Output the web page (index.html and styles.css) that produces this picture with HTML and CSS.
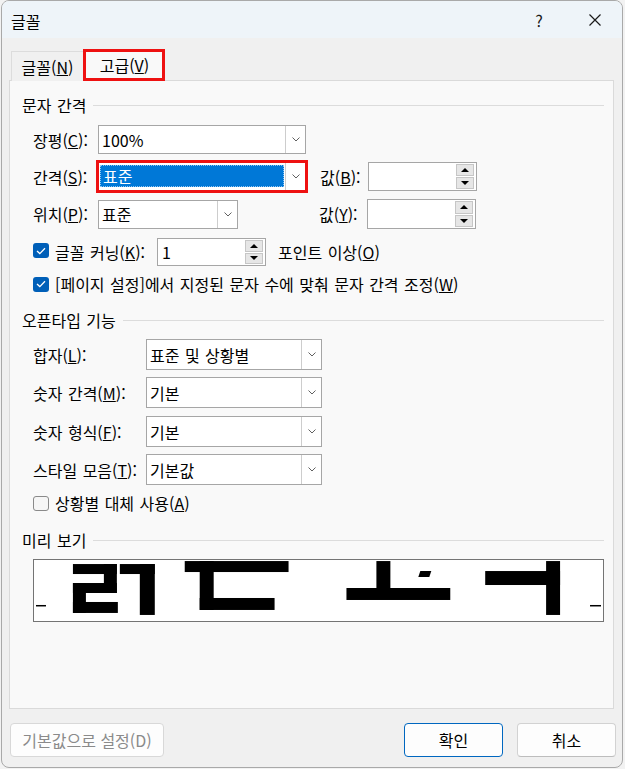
FILE: index.html
```html
<!DOCTYPE html>
<html lang="ko">
<head>
<meta charset="utf-8">
<title>글꼴</title>
<link rel="stylesheet" href="styles.css">
</head>
<body>
<div class="window">
  <div class="titlebar">
    <span class="title">글꼴</span>
    <span class="help">?</span>
    <span class="close"><svg width="12" height="12" viewBox="0 0 12 12"><path d="M0.5 0.5 L11.5 11.5 M11.5 0.5 L0.5 11.5" stroke="#1a1a1a" stroke-width="1.2" fill="none"/></svg></span>
  </div>

  <div class="tabs">
    <div class="tab">글꼴(<u>N</u>)</div>
    <div class="tab active">고급(<u>V</u>)</div>
  </div>

  <div class="panel">
    <div class="group-title gt1"><span>문자 간격</span></div>

    <div class="row r1">
      <span class="lbl w65">장평(<u>C</u>):</span>
      <div class="combo cw208"><span class="val">100%</span><span class="arrow"><svg width="8" height="5" viewBox="0 0 8 5"><polyline points="0.5,0.5 4,4 7.5,0.5" fill="none" stroke="#606060" stroke-width="1"/></svg></span></div>
    </div>

    <div class="row r2">
      <span class="lbl w65">간격(<u>S</u>):</span>
      <div class="cell222">
        <div class="combo cw208 marked"><span class="val"><span class="sel">표준</span></span><span class="arrow"><svg width="8" height="5" viewBox="0 0 8 5"><polyline points="0.5,0.5 4,4 7.5,0.5" fill="none" stroke="#606060" stroke-width="1"/></svg></span></div>
      </div>
      <span class="lbl w48">값(<u>B</u>):</span>
      <div class="spin sw109 sh29"><span class="spin-text"></span><span class="spin-btns"><span class="sb up"></span><span class="sb down"></span></span></div>
    </div>

    <div class="row r3">
      <span class="lbl w65">위치(<u>P</u>):</span>
      <div class="cell221">
        <div class="combo cw140"><span class="val">표준</span><span class="arrow"><svg width="8" height="5" viewBox="0 0 8 5"><polyline points="0.5,0.5 4,4 7.5,0.5" fill="none" stroke="#606060" stroke-width="1"/></svg></span></div>
      </div>
      <span class="lbl w48">값(<u>Y</u>):</span>
      <div class="spin sw109 sh30"><span class="spin-text"></span><span class="spin-btns"><span class="sb up"></span><span class="sb down"></span></span></div>
    </div>

    <div class="row r4">
      <span class="check on"><svg width="10" height="8" viewBox="0 0 10 8"><polyline points="1,4 3.8,6.6 9,1.2" fill="none" stroke="#fff" stroke-width="1.3"/></svg></span>
      <span class="lbl w102">글꼴 커닝(<u>K</u>):</span>
      <div class="spin sw109 sh28"><span class="spin-text">1</span><span class="spin-btns"><span class="sb up"></span><span class="sb down"></span></span></div>
      <span class="lbl after">포인트 이상(<u>O</u>)</span>
    </div>

    <div class="row r5">
      <span class="check on"><svg width="10" height="8" viewBox="0 0 10 8"><polyline points="1,4 3.8,6.6 9,1.2" fill="none" stroke="#fff" stroke-width="1.3"/></svg></span>
      <span class="lbl">[페이지 설정]에서 지정된 문자 수에 맞춰 문자 간격 조정(<u>W</u>)</span>
    </div>

    <div class="group-title gt2"><span>오픈타입 기능</span></div>

    <div class="row ot o1">
      <span class="lbl w113">합자(<u>L</u>):</span>
      <div class="combo cw176 tall"><span class="val">표준 및 상황별</span><span class="arrow"><svg width="8" height="5" viewBox="0 0 8 5"><polyline points="0.5,0.5 4,4 7.5,0.5" fill="none" stroke="#606060" stroke-width="1"/></svg></span></div>
    </div>
    <div class="row ot o2">
      <span class="lbl w113">숫자 간격(<u>M</u>):</span>
      <div class="combo cw176 tall"><span class="val">기본</span><span class="arrow"><svg width="8" height="5" viewBox="0 0 8 5"><polyline points="0.5,0.5 4,4 7.5,0.5" fill="none" stroke="#606060" stroke-width="1"/></svg></span></div>
    </div>
    <div class="row ot o3">
      <span class="lbl w113">숫자 형식(<u>F</u>):</span>
      <div class="combo cw176 tall"><span class="val">기본</span><span class="arrow"><svg width="8" height="5" viewBox="0 0 8 5"><polyline points="0.5,0.5 4,4 7.5,0.5" fill="none" stroke="#606060" stroke-width="1"/></svg></span></div>
    </div>
    <div class="row ot o4">
      <span class="lbl w113">스타일 모음(<u>T</u>):</span>
      <div class="combo cw176 tall"><span class="val">기본값</span><span class="arrow"><svg width="8" height="5" viewBox="0 0 8 5"><polyline points="0.5,0.5 4,4 7.5,0.5" fill="none" stroke="#606060" stroke-width="1"/></svg></span></div>
    </div>

    <div class="row r6">
      <span class="check off"></span>
      <span class="lbl">상황별 대체 사용(<u>A</u>)</span>
    </div>

    <div class="group-title gt3"><span>미리 보기</span></div>

    <div class="preview">
      <svg width="570" height="62" viewBox="0 0 570 62">
        <rect x="2" y="45" width="10" height="1.5" fill="#000"/>
        <rect x="557" y="45" width="11" height="1.5" fill="#000"/>
        <g fill="#000">
          <rect x="39" y="4" width="44" height="10"/>
          <rect x="70" y="4" width="13" height="29"/>
          <rect x="39" y="23" width="44" height="10"/>
          <rect x="39" y="23" width="13" height="30"/>
          <rect x="39" y="42" width="45" height="11"/>
          <rect x="86" y="4" width="35" height="10"/>
          <rect x="106" y="4" width="15" height="51"/>
          <rect x="151" y="1" width="104" height="11"/>
          <rect x="166" y="1" width="14" height="49"/>
          <rect x="166" y="38" width="75" height="12"/>
          <rect x="343" y="1" width="14" height="28"/>
          <rect x="313" y="28" width="104" height="12"/>
          <polygon points="387,11 398,11 396,17 385,17"/>
          <rect x="452" y="11" width="75" height="14"/>
          <rect x="513" y="1" width="14" height="54"/>
        </g>
      </svg>
    </div>
  </div>

  <div class="footer">
    <button class="btn disabled">기본값으로 설정(D)</button>
    <div class="btn-group">
      <button class="btn primary">확인</button>
      <button class="btn">취소</button>
    </div>
  </div>
</div>
</body>
</html>
```

FILE: styles.css
```css
* { box-sizing: border-box; }

html, body {
  margin: 0;
  padding: 0;
}

body {
  background: #f2f2f2;
  width: 625px;
  height: 769px;
  overflow: hidden;
  font-family: "Noto Sans CJK KR", "Malgun Gothic", "Noto Sans", sans-serif;
  font-size: 16px;
  word-spacing: 1px;
  color: #000;
}

.window {
  margin-left: 1px;
  width: 622px;
  height: 768px;
  border: 1px solid #a9a9a9;
  border-radius: 8px;
  background: #f0f0f0;
  overflow: hidden;
  display: flex;
  flex-direction: column;
}

.titlebar {
  height: 37px;
  flex: none;
  background: #eef4f9;
  display: flex;
  align-items: center;
  padding-left: 9px;
}

.title {
  flex: 1;
  line-height: 20px;
  padding-top: 2px;
}

.help {
  width: 14px;
  text-align: center;
  margin-right: 43px;
  line-height: 20px;
  color: #1a1a1a;
}

.close {
  width: 12px;
  height: 12px;
  margin-right: 21px;
  display: flex;
}

.tabs {
  display: flex;
  align-items: flex-end;
  height: 32px;
  margin: 11px 0 0 8px;
  position: relative;
  z-index: 1;
}

.tab {
  height: 30px;
  width: 72px;
  margin-left: 1px;
  display: flex;
  align-items: center;
  justify-content: center;
  background: #f0f0f0;
  border-top: 1px solid #dcdcdc;
  border-left: 1px solid #dcdcdc;
  line-height: 20px;
  padding-top: 1px;
}

.tab.active {
  height: 32px;
  width: 82px;
  margin-left: 0;
  border: none;
  background: #f9f9f9;
  box-shadow: inset 0 0 0 3px #ee1111;
  padding-top: 0;
  padding-left: 1px;
}

.panel {
  margin: -1px 0 0 7px;
  width: 605px;
  height: 629px;
  flex: none;
  background: #f9f9f9;
  border: 1px solid #dadada;
  padding: 0 9px 0 12px;
  display: flex;
  flex-direction: column;
}

.group-title {
  display: flex;
  align-items: center;
  gap: 7px;
  height: 20px;
  line-height: 20px;
}

.group-title::after {
  content: "";
  flex: 1;
  height: 1px;
  background: #dcdcdc;
}

.gt1 { margin-top: 14px; }
.gt2 { margin-top: 16px; }
.gt3 { margin-top: 17px; }

.row {
  display: flex;
  align-items: center;
  margin-left: 11px;
}

.r1 { margin-top: 10px; height: 29px; }
.r2 { margin-top: 8px; height: 29px; }
.r3 { margin-top: 8px; height: 30px; }
.r4 { margin-top: 9px; height: 28px; }
.r5 { margin-top: 8px; height: 20px; }
.o1 { margin-top: 9px; }
.o2 { margin-top: 7px; }
.o3 { margin-top: 8px; }
.o4 { margin-top: 7px; }
.r6 { margin-top: 8px; height: 20px; }

.lbl {
  line-height: 20px;
  white-space: nowrap;
  flex: none;
}

.w65 { width: 65px; }
.w48 { width: 48px; }
.w102 { width: 102px; }
.w113 { width: 113px; }

.lbl.after { margin-left: 12px; }

.cell222 { width: 222px; flex: none; }
.cell221 { width: 221px; flex: none; }

.combo {
  display: flex;
  height: 29px;
  border: 1px solid #a6a6a6;
  background: #fff;
}

.combo.tall { height: 31px; }

.cw208 { width: 208px; }
.cw140 { width: 140px; }
.cw176 { width: 176px; }

.combo .val {
  flex: 1;
  display: flex;
  align-items: center;
  padding-left: 3px;
  line-height: 20px;
  white-space: nowrap;
}

.combo .arrow {
  width: 20px;
  flex: none;
  border-left: 1px solid #cdcdcd;
  display: flex;
  align-items: center;
  justify-content: center;
}

.combo.marked {
  outline: 3px solid #ee1111;
  outline-offset: -1px;
}

.combo.marked .val {
  padding: 2px 1px 3px 1px;
}

.sel {
  flex: 1;
  height: 100%;
  background: #0078d7;
  color: #fff;
  display: flex;
  align-items: center;
  padding-left: 3px;
  outline: 1px dotted #8fc6f2;
  outline-offset: -1px;
}

.spin {
  display: flex;
  border: 1px solid #a6a6a6;
  background: #fff;
  flex: none;
  padding: 1px 2px 1px 0;
}

.sw109 { width: 109px; }
.sh29 { height: 29px; }
.sh30 { height: 30px; }
.sh28 { height: 28px; }

.spin-text {
  flex: 1;
  display: flex;
  align-items: center;
  padding-left: 4px;
  line-height: 20px;
}

.spin-btns {
  width: 18px;
  display: flex;
  flex-direction: column;
  gap: 1px;
}

.sb {
  flex: 1;
  background: #e6e6e6;
  border: 1px solid #c6c6c6;
  display: flex;
  align-items: center;
  justify-content: center;
}

.sb.up::before {
  content: "";
  border-left: 4px solid transparent;
  border-right: 4px solid transparent;
  border-bottom: 4px solid #000;
}

.sb.down::before {
  content: "";
  border-left: 4px solid transparent;
  border-right: 4px solid transparent;
  border-top: 4px solid #000;
}

.check {
  width: 16px;
  height: 15px;
  border-radius: 3px;
  flex: none;
  margin-right: 6px;
  display: flex;
  align-items: center;
  justify-content: center;
}

.check.on {
  background: #005fb8;
}

.r4 .check { margin-top: -3px; }

.check.off {
  border: 1px solid #8a8a8a;
  background: #f6f6f6;
}

.preview {
  margin: 9px 0 0 11px;
  width: 571px;
  height: 63px;
  border: 1px solid #747474;
  background: #fff;
  display: flex;
}

.preview svg { display: block; }

.footer {
  display: flex;
  justify-content: space-between;
  margin: 14px 0 0 8px;
  width: 606px;
}

.btn-group {
  display: flex;
  gap: 14px;
}

.btn {
  font-family: inherit;
  font-size: 16px;
  height: 34px;
  width: 99px;
  border: 1px solid #d2d2d2;
  border-bottom-color: #bdbdbd;
  border-radius: 4px;
  background: #fdfdfd;
  color: #000;
  padding: 0;
  line-height: 20px;
}

.btn.disabled {
  width: 154px;
  color: #8a8a8a;
  border-color: #d8d8d8;
}

.btn.primary {
  border: 1px solid #0067c0;
}
```
